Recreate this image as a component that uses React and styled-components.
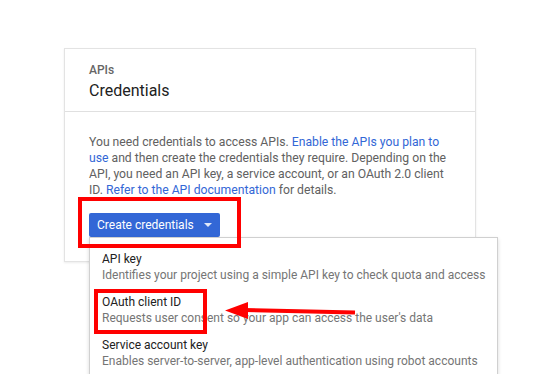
import React from "react";
import styled, { createGlobalStyle } from "styled-components";

const Global = createGlobalStyle`
  html, body { margin: 0; padding: 0; background: #fff; }
  body { font-family: Roboto, "Liberation Sans", Arial, sans-serif; -webkit-font-smoothing: antialiased; }
  #root { width: 539px; height: 374px; overflow: hidden; }
`;

const Page = styled.div`
  position: relative;
  width: 539px;
  height: 374px;
  overflow: hidden;
  padding: 48px 0 0 64px;
  box-sizing: border-box;
`;

const Card = styled.section`
  width: 412px;
  height: 214px;
  box-sizing: border-box;
  border: 1px solid #e3e3e3;
  box-shadow: 0 1px 2px rgba(0, 0, 0, 0.08);
  background: #fff;
`;

const Header = styled.header`
  padding: 13px 24px 0;
  height: 63px;
  box-sizing: border-box;
  border-bottom: 1px solid #e0e0e0;
`;

const Eyebrow = styled.div`
  font-size: 12px;
  line-height: 16px;
  font-weight: 500;
  color: #666;
`;

const Title = styled.h1`
  margin: 2px 0 0;
  font-size: 16px;
  line-height: 22px;
  font-weight: 400;
  color: #212121;
`;

const Body = styled.div`
  padding: 22px 24px 0;
`;

const Text = styled.p`
  margin: 0;
  width: 362px;
  font-size: 12.2px;
  line-height: 16px;
  color: #616161;
`;

const Link = styled.a`
  color: #3367d6;
  text-decoration: none;
`;

const ButtonWrap = styled.div`
  position: relative;
  display: inline-block;
  margin-top: 15px;
  vertical-align: top;
`;

const Button = styled.button`
  display: flex;
  align-items: center;
  gap: 10px;
  height: 24px;
  width: 131px;
  padding: 0 8px;
  box-sizing: border-box;
  border: none;
  border-radius: 2px;
  background: #3367d6;
  color: #fff;
  font-family: inherit;
  font-size: 12px;
  white-space: nowrap;
`;

const Caret = styled.span`
  width: 0;
  height: 0;
  border-left: 4px solid transparent;
  border-right: 4px solid transparent;
  border-top: 4px solid rgba(255, 255, 255, 0.85);
`;

const Menu = styled.ul`
  position: absolute;
  top: 100%;
  left: 0;
  width: 409px;
  margin: 0;
  padding: 7px 0 8px;
  list-style: none;
  box-sizing: border-box;
  background: #fff;
  border: 1px solid #d0d0d0;
  box-shadow: 0 2px 4px rgba(0, 0, 0, 0.15);
  z-index: 2;
`;

const Item = styled.li`
  padding: 6px 12px 5px;
  font-size: 12px;
  line-height: 16px;
  white-space: nowrap;
`;

const ItemTitle = styled.div`
  color: #212121;
`;

const ItemDesc = styled.div`
  color: #757575;
`;

const Highlight = styled.div`
  position: absolute;
  left: ${(p) => p.x}px;
  top: ${(p) => p.y}px;
  width: ${(p) => p.w}px;
  height: ${(p) => p.h}px;
  box-sizing: border-box;
  border: 4px solid #f00;
  z-index: 3;
  pointer-events: none;
`;

const ArrowSvg = styled.svg`
  position: absolute;
  left: 0;
  top: 0;
  z-index: 3;
  pointer-events: none;
`;

const items = [
  {
    title: "API key",
    desc: "Identifies your project using a simple API key to check quota and access",
  },
  {
    title: "OAuth client ID",
    desc: "Requests user consent so your app can access the user's data",
  },
  {
    title: "Service account key",
    desc: "Enables server-to-server, app-level authentication using robot accounts",
  },
];

export default function App() {
  return (
    <>
      <Global />
      <Page>
        <Card>
          <Header>
            <Eyebrow>APIs</Eyebrow>
            <Title>Credentials</Title>
          </Header>
          <Body>
            <Text>
              You need credentials to access APIs.{" "}
              <Link href="#">Enable the APIs you plan to use</Link> and then
              create the credentials they require. Depending on the API, you
              need an API key, a service account, or an OAuth 2.0 client ID.{" "}
              <Link href="#">Refer to the API documentation</Link> for details.
            </Text>
            <ButtonWrap>
              <Button>
                Create credentials
                <Caret />
              </Button>
              <Menu>
                {items.map((it) => (
                  <Item key={it.title}>
                    <ItemTitle>{it.title}</ItemTitle>
                    <ItemDesc>{it.desc}</ItemDesc>
                  </Item>
                ))}
              </Menu>
            </ButtonWrap>
          </Body>
        </Card>
        <Highlight x={78} y={197} w={163} h={51} />
        <Highlight x={94} y={289} w={113} h={45} />
        <ArrowSvg width="539" height="374" viewBox="0 0 539 374">
          <line x1="244" y1="310" x2="355" y2="312.5" stroke="#f00" strokeWidth="4" />
          <polygon points="225,310.5 248,302 248,319" fill="#f00" />
        </ArrowSvg>
      </Page>
    </>
  );
}
